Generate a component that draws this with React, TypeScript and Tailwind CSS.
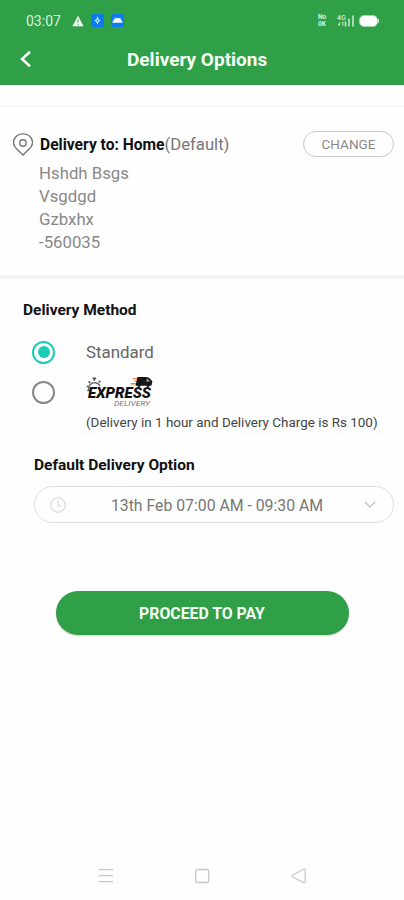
const addressLines = ['Hshdh Bsgs', 'Vsgdgd', 'Gzbxhx', '-560035']

function StatusBar() {
  return (
    <div className="flex h-[41px] items-center pr-[25px] pl-[26px]">
      <span className="w-[46px] text-[14px] leading-none whitespace-nowrap text-[#d9f3dc]">03:07</span>
      <svg className="h-3 w-3" viewBox="0 0 12 12" fill="none">
        <path d="M6 .8 11.6 11.3H.4Z" fill="#f4fff4" />
        <path d="M6 4.4v3.2M6 8.7v1.2" stroke="#2fa048" strokeWidth="1" />
      </svg>
      <svg className="ml-[7px] h-[13px] w-[13px]" viewBox="0 0 13 13">
        <rect width="13" height="13" rx="2.5" fill="#0b7bf0" />
        <path d="M6.5 2.3q.6 3.2 3 4.2-2.4 1-3 4.2-.6-3.2-3-4.2 2.4-1 3-4.2Z" fill="#d5edff" />
        <circle cx="6.5" cy="6.5" r=".9" fill="#0b7bf0" />
      </svg>
      <svg className="ml-[7px] h-[13px] w-[13px]" viewBox="0 0 13 13">
        <rect width="13" height="13" rx="2.5" fill="#0b7bf0" />
        <path d="M4.2 4.8 3.5 3.7M8.8 4.8l.7-1.1" stroke="#fff" strokeWidth=".7" fill="none" />
        <path d="M1.5 8.7a5 4.6 0 0 1 10 0Z" fill="#fff" />
      </svg>

      <div className="ml-auto flex items-center">
        <div className="flex w-[10px] flex-col text-[6.5px] leading-[7px] font-bold text-[#d9f3dc]">
          <span>No</span>
          <span>0K</span>
        </div>
        <svg className="ml-2 h-[14px] w-[19px]" viewBox="0 0 19 14">
          <text x="1" y="6" fontSize="7" fontWeight="600" fill="#c4e9ca">4G</text>
          <path d="M3.5 8.3v3.5M2 9.8l1.5 2M6.8 12V7.8l-1 1" stroke="#c4e9ca" strokeWidth="1" fill="none" />
          <path d="M9.5 12.5V7.5M13 12.5V4.8M17 12.5V1.5" stroke="#c4e9ca" strokeWidth="1.6" />
        </svg>
        <div className="ml-1 h-[12px] w-[19px] rounded-[5px] border border-[#9dd8a8] bg-white" />
        <div className="h-1 w-px bg-[#c4e9ca]" />
      </div>
    </div>
  )
}

function Header() {
  return (
    <header className="h-[85px] border-b border-[#259341] bg-[#2fa048]">
      <StatusBar />
      <div className="flex h-[36px] items-center">
        <svg className="ml-5 h-[18px] w-[12px]" viewBox="0 0 12 18" fill="none">
          <path d="M10 1.8 2 9l8 7.2" stroke="#fff" strokeWidth="2.5" />
        </svg>
        <h1 className="ml-[95px] pt-[2px] text-[19px] font-bold whitespace-nowrap text-[#f5fff5]">Delivery Options</h1>
      </div>
    </header>
  )
}

function DeliveryAddress() {
  return (
    <section className="mt-[21px] h-[173px] border-t border-[#f5f5f5] border-b-4 border-b-[#f3f3f3] pt-[22px]">
      <div className="flex h-[30px] items-center pr-[10px] pl-[13px]">
        <svg className="h-[23px] w-5" viewBox="0 0 20 23" fill="none" stroke="#777" strokeWidth="1.4">
          <path d="M10 22 3.8 16C-.8 11.6.3 7 2.5 4.2 6.2-.2 13.8-.2 17.5 4.2c2.2 2.8 3.3 7.4-1.3 11.8Z" />
          <circle cx="10" cy="10" r="3.2" />
        </svg>
        <p className="ml-[7px] pt-px text-[16.7px] whitespace-nowrap text-[#777]">
          <span className="text-[15.6px] font-bold text-[#111]">Delivery to: Home</span>(Default)
        </p>
        <button className="ml-auto flex h-[26px] w-[91px] items-center justify-center rounded-full border border-[#c9c9c9] text-[13.5px] text-[#8a8a8a]">
          CHANGE
        </button>
      </div>
      <div className="ml-[39px] pt-[3px] text-[16.8px] leading-[23px] text-[#888]">
        {addressLines.map((line) => (
          <p key={line}>{line}</p>
        ))}
      </div>
    </section>
  )
}

// Small courier badge: gear, van and the wordmark
function ExpressLogo() {
  return (
    <svg className="h-[32px] w-[68px]" viewBox="0 0 68 32" fill="none">
      <path d="M3.2 15.5A6 6 0 1 1 14 10" stroke="#666" strokeWidth="1.4" />
      <path d="M6.5 2.4h3.6M8.3 2.4v2.4M2.6 5.3l1.6 1.5M12.8 6.4l1.4-1.5M.6 10.5h2M1.4 14.6l1.6-.8" stroke="#555" strokeWidth="1.6" />
      <path d="M46.5 2.6h6M48.5 5.1h4M44.5 7.8h7" stroke="#f18a42" strokeWidth="1.4" />
      <path d="M51.5 1H60l3 .8 3.4 3.4-1 4.6H49.5Z" fill="#161616" />
      <path d="m61 2.6 3.2 2.8h-4Z" fill="#aaa" />
      <circle cx="53" cy="9.6" r="1.5" fill="#161616" />
      <circle cx="62" cy="9.6" r="1.5" fill="#161616" />
      <text x="2" y="21.5" fontSize="14.5" fontWeight="900" fontStyle="italic" fill="#111" textLength="63" lengthAdjust="spacingAndGlyphs">
        EXPRESS
      </text>
      <text x="28" y="30.2" fontSize="7.6" fontStyle="italic" fill="#777" textLength="36" lengthAdjust="spacingAndGlyphs">
        DELIVERY
      </text>
    </svg>
  )
}

function DeliveryMethod() {
  return (
    <section className="h-[155px] border-b border-[#fafafa] pt-[19px]">
      <h2 className="ml-[23px] text-[15.5px] leading-6 font-bold text-[#111]">Delivery Method</h2>
      <div className="mt-[10px] flex h-10 items-center pl-8">
        <div className="flex h-[23px] w-[23px] items-center justify-center rounded-full border-2 border-[#1bcdb8]">
          <div className="h-3 w-3 rounded-full bg-[#1bcdb8]" />
        </div>
        <span className="ml-[31px] pt-px text-[16.9px] text-[#666]">Standard</span>
      </div>
      <div className="flex h-10 items-center pl-8">
        <div className="h-[23px] w-[23px] rounded-full border-2 border-[#888]" />
        <div className="ml-[31px]">
          <ExpressLogo />
        </div>
      </div>
      <p className="ml-[86px] pt-px text-[13.45px] leading-5 whitespace-nowrap text-[#444]">
        (Delivery in 1 hour and Delivery Charge is Rs 100)
      </p>
    </section>
  )
}

function DeliverySlot() {
  return (
    <section className="h-[157px] pt-[19px] pr-[10px] pl-[34px]">
      <h2 className="text-[15.5px] leading-6 font-bold text-[#111]">Default Delivery Option</h2>
      <div className="mt-[9px] flex h-[37px] items-center rounded-full border border-[#dedede] pr-[17px] pl-[15px]">
        <svg className="h-4 w-4" viewBox="0 0 16 16" fill="none" stroke="#d6d6d6" strokeWidth="1.1">
          <circle cx="8" cy="8" r="7.2" />
          <path d="M8 3.5V8l2.5 2" />
        </svg>
        <span className="flex-1 pt-[2px] pl-1 text-center text-[15.8px] whitespace-nowrap text-[#777]">13th Feb 07:00 AM - 09:30 AM</span>
        <svg className="h-[7px] w-3" viewBox="0 0 12 7" fill="none" stroke="#bbb" strokeWidth="1.1">
          <path d="m1 1 5 5 5-5" />
        </svg>
      </div>
    </section>
  )
}

function NavBar() {
  return (
    <nav className="mt-auto flex h-[48px] items-center justify-between px-[98px] text-[#c8c8c8]">
      <svg className="h-4 w-4" viewBox="0 0 16 16" fill="none" stroke="currentColor" strokeWidth="1.3">
        <path d="M1 1.7h14M1 7.7h14M1 13.7h14" />
      </svg>
      <svg className="h-4 w-4" viewBox="0 0 16 16" fill="none" stroke="currentColor" strokeWidth="1.3">
        <rect x="1.7" y="1.5" width="13" height="13" rx="2" />
      </svg>
      <svg className="h-4 w-4" viewBox="0 0 16 16" fill="none" stroke="currentColor" strokeWidth="1.2">
        <path d="M2.5 7.2 13.8 1.2q1.4-.5 1.4 1.1v11.2q0 1.6-1.4 1.1L2.5 8.8q-.9-.8 0-1.6Z" />
      </svg>
    </nav>
  )
}

export default function App() {
  return (
    <div className="flex h-[900px] w-[404px] flex-col overflow-hidden bg-[#fefefe] font-['Roboto',sans-serif]">
      <Header />
      <DeliveryAddress />
      <DeliveryMethod />
      <DeliverySlot />
      <button className="mx-auto h-[44px] w-[293px] rounded-full bg-[#2fa048] pt-px text-[15.8px] font-bold text-[#f5fff5] shadow-[0_1px_2px_rgba(0,0,0,0.18)]">
        PROCEED TO PAY
      </button>
      <NavBar />
    </div>
  )
}
